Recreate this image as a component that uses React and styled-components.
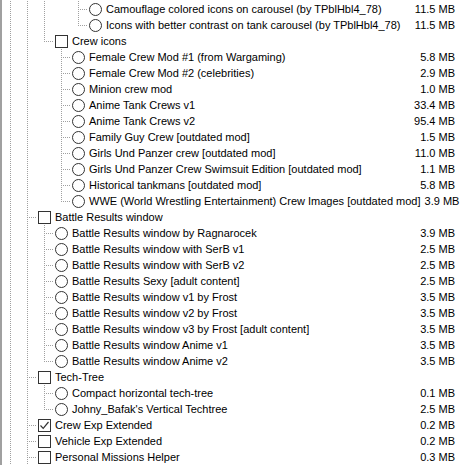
import styled, { createGlobalStyle } from 'styled-components'

const GlobalStyle = createGlobalStyle`
    html, body {
        margin: 0;
        padding: 0;
        background: #fff;
        overflow: hidden;
    }
`

// guides: one char per ancestor column, '|' keeps the line going, ' ' leaves it blank
// end: true when the node is the last child (└ instead of ├)
const rows = [
    { guides: '||| ', end: false, kind: 'radio', label: 'Camouflage colored icons on carousel (by TPblHbl4_78)', size: '11.5 MB' },
    { guides: '||| ', end: true, kind: 'radio', label: 'Icons with better contrast on tank carousel (by TPblHbl4_78)', size: '11.5 MB' },
    { guides: '||', end: true, kind: 'check', label: 'Crew icons' },
    { guides: '|| ', end: false, kind: 'radio', label: 'Female Crew Mod #1 (from Wargaming)', size: '5.8 MB' },
    { guides: '|| ', end: false, kind: 'radio', label: 'Female Crew Mod #2 (celebrities)', size: '2.9 MB' },
    { guides: '|| ', end: false, kind: 'radio', label: 'Minion crew mod', size: '1.0 MB' },
    { guides: '|| ', end: false, kind: 'radio', label: 'Anime Tank Crews v1', size: '33.4 MB' },
    { guides: '|| ', end: false, kind: 'radio', label: 'Anime Tank Crews v2', size: '95.4 MB' },
    { guides: '|| ', end: false, kind: 'radio', label: 'Family Guy Crew [outdated mod]', size: '1.5 MB' },
    { guides: '|| ', end: false, kind: 'radio', label: 'Girls Und Panzer crew [outdated mod]', size: '11.0 MB' },
    { guides: '|| ', end: false, kind: 'radio', label: 'Girls Und Panzer Crew Swimsuit Edition [outdated mod]', size: '1.1 MB' },
    { guides: '|| ', end: false, kind: 'radio', label: 'Historical tankmans [outdated mod]', size: '5.8 MB' },
    { guides: '|| ', end: true, kind: 'radio', label: 'WWE (World Wrestling Entertainment) Crew Images [outdated mod]', size: '3.9 MB' },
    { guides: '|', end: false, kind: 'check', label: 'Battle Results window' },
    { guides: '||', end: false, kind: 'radio', label: 'Battle Results window by Ragnarocek', size: '3.9 MB' },
    { guides: '||', end: false, kind: 'radio', label: 'Battle Results window with SerB v1', size: '2.5 MB' },
    { guides: '||', end: false, kind: 'radio', label: 'Battle Results window with SerB v2', size: '2.5 MB' },
    { guides: '||', end: false, kind: 'radio', label: 'Battle Results Sexy [adult content]', size: '2.5 MB' },
    { guides: '||', end: false, kind: 'radio', label: 'Battle Results window v1 by Frost', size: '3.5 MB' },
    { guides: '||', end: false, kind: 'radio', label: 'Battle Results window v2 by Frost', size: '3.5 MB' },
    { guides: '||', end: false, kind: 'radio', label: 'Battle Results window v3 by Frost [adult content]', size: '3.5 MB' },
    { guides: '||', end: false, kind: 'radio', label: 'Battle Results window Anime v1', size: '3.5 MB' },
    { guides: '||', end: true, kind: 'radio', label: 'Battle Results window Anime v2', size: '3.5 MB' },
    { guides: '|', end: false, kind: 'check', label: 'Tech-Tree' },
    { guides: '||', end: false, kind: 'radio', label: 'Compact horizontal tech-tree', size: '0.1 MB' },
    { guides: '||', end: true, kind: 'radio', label: "Johny_Bafak's Vertical Techtree", size: '2.5 MB' },
    { guides: '|', end: false, kind: 'checked', label: 'Crew Exp Extended', size: '0.2 MB' },
    { guides: '|', end: false, kind: 'check', label: 'Vehicle Exp Extended', size: '0.2 MB' },
    { guides: '|', end: false, kind: 'check', label: 'Personal Missions Helper', size: '0.3 MB' },
]

export default function App() {
    return (
        <>
            <GlobalStyle />
            <Tree>
                {rows.map((r, i) => (
                    <Row key={i}>
                        {r.guides.split('').map((g, j) => (
                            <Guide key={j} $line={g === '|'} />
                        ))}
                        <Connector $end={r.end} />
                        {r.kind === 'radio' ? <Radio /> : <Check>{r.kind === 'checked' && <Tick />}</Check>}
                        <Label>{r.label}</Label>
                        {r.size && <Size>{r.size}</Size>}
                    </Row>
                ))}
            </Tree>
        </>
    )
}

const Tick = () => (
    <svg width="11" height="11" viewBox="0 0 11 11">
        <path d="M1.5 5.5 L4.2 8.3 L9.5 2" fill="none" stroke="#333" strokeWidth="1.2" />
    </svg>
)

const dotsDown = 'linear-gradient(#a0a0a0 50%, transparent 50%)'
const dotsAcross = 'linear-gradient(to right, #a0a0a0 50%, transparent 50%)'

const Tree = styled.div`
    height: 465px;
    box-sizing: border-box;
    padding-top: 1px;
    border-left: 2px solid #a0a0a0;
    font-family: Tahoma, "Liberation Sans", Arial, sans-serif;
    font-size: 11px;
    color: #000;
`

const Row = styled.div`
    display: flex;
    align-items: center;
    height: 16px;
    padding-right: 6px;
    white-space: nowrap;
`

const Guide = styled.span`
    flex: none;
    width: 17px;
    height: 16px;
    ${p => p.$line && `
        background-image: ${dotsDown};
        background-size: 1px 2px;
        background-position: 8px 0;
        background-repeat: repeat-y;
    `}
`

// ├ or └ piece in front of a node
const Connector = styled.span`
    flex: none;
    width: 17px;
    height: 16px;
    position: relative;
    &::before {
        content: '';
        position: absolute;
        left: 8px;
        top: 0;
        width: 1px;
        height: ${p => (p.$end ? '8px' : '16px')};
        background: ${dotsDown};
        background-size: 1px 2px;
    }
    &::after {
        content: '';
        position: absolute;
        left: 8px;
        top: 8px;
        width: 9px;
        height: 1px;
        background: ${dotsAcross};
        background-size: 2px 1px;
    }
`

const Check = styled.span`
    flex: none;
    width: 13px;
    height: 13px;
    box-sizing: border-box;
    margin-left: 2px;
    border: 1px solid #333;
    background: #fff;
    display: flex;
    align-items: center;
    justify-content: center;
`

const Radio = styled.span`
    flex: none;
    width: 13px;
    height: 13px;
    box-sizing: border-box;
    margin-left: 2px;
    border: 1px solid #333;
    border-radius: 50%;
    background: #fff;
`

const Label = styled.span`
    margin-left: 4px;
`

const Size = styled.span`
    margin-left: auto;
    padding-left: 4px;
`
